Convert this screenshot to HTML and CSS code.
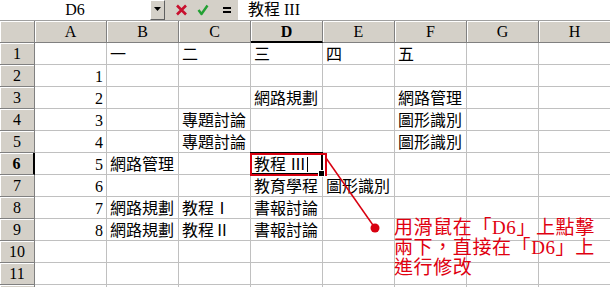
FILE: index.html
```html
<!DOCTYPE html>
<html lang="zh-Hant">
<head>
<meta charset="utf-8">
<title>Excel D6</title>
<link rel="stylesheet" href="styles.css">
</head>
<body>
<div class="app">
  <div class="fbar">
    <div class="namebox">D6</div>
    <div class="dropbtn"><svg width="7" height="4" viewBox="0 0 7 4"><path d="M0 0H7L3.5 4Z" fill="#000"/></svg></div>
    <div class="fbtns">
      <svg class="ico" width="13" height="12" viewBox="0 0 13 12"><path d="M2 1.5L11 10.5M11 1.5L2 10.5" stroke="#c8102e" stroke-width="2.6" fill="none"/></svg>
      <svg class="ico" width="12" height="12" viewBox="0 0 12 12"><path d="M1.5 6L4.5 10L10.5 1.5" stroke="#22a033" stroke-width="2.4" fill="none" stroke-linejoin="round"/></svg>
      <svg class="ico" width="8" height="6" viewBox="0 0 8 6"><path d="M0 1H8M0 5H8" stroke="#000" stroke-width="2"/></svg>
    </div>
    <div class="ftext">教程 III</div>
  </div>

  <div class="sheet">
    <div class="hd corner"></div>
    <div class="hd">A</div><div class="hd">B</div><div class="hd">C</div><div class="hd act-col">D</div><div class="hd">E</div><div class="hd">F</div><div class="hd">G</div><div class="hd">H</div>

    <div class="rh">1</div><div class="c"></div><div class="c">一</div><div class="c">二</div><div class="c">三</div><div class="c">四</div><div class="c">五</div><div class="c"></div><div class="c"></div>
    <div class="rh">2</div><div class="c num">1</div><div class="c"></div><div class="c"></div><div class="c"></div><div class="c"></div><div class="c"></div><div class="c"></div><div class="c"></div>
    <div class="rh">3</div><div class="c num">2</div><div class="c"></div><div class="c"></div><div class="c">網路規劃</div><div class="c"></div><div class="c">網路管理</div><div class="c"></div><div class="c"></div>
    <div class="rh">4</div><div class="c num">3</div><div class="c"></div><div class="c">專題討論</div><div class="c"></div><div class="c"></div><div class="c">圖形識別</div><div class="c"></div><div class="c"></div>
    <div class="rh">5</div><div class="c num">4</div><div class="c"></div><div class="c">專題討論</div><div class="c"></div><div class="c"></div><div class="c">圖形識別</div><div class="c"></div><div class="c"></div>
    <div class="rh act-row">6</div><div class="c num">5</div><div class="c">網路管理</div><div class="c"></div><div class="c active">教程 Ⅲ<span class="caret"></span></div><div class="c"></div><div class="c"></div><div class="c"></div><div class="c"></div>
    <div class="rh">7</div><div class="c num">6</div><div class="c"></div><div class="c"></div><div class="c">教育學程</div><div class="c">圖形識別</div><div class="c"></div><div class="c"></div><div class="c"></div>
    <div class="rh">8</div><div class="c num">7</div><div class="c">網路規劃</div><div class="c">教程Ⅰ</div><div class="c">書報討論</div><div class="c"></div><div class="c"></div><div class="c"></div><div class="c"></div>
    <div class="rh">9</div><div class="c num">8</div><div class="c">網路規劃</div><div class="c">教程Ⅱ</div><div class="c">書報討論</div><div class="c"></div><div class="c"></div><div class="c"></div><div class="c"></div>
    <div class="rh">10</div><div class="c"></div><div class="c"></div><div class="c"></div><div class="c"></div><div class="c"></div><div class="c"></div><div class="c"></div><div class="c"></div>
    <div class="rh">11</div><div class="c"></div><div class="c"></div><div class="c"></div><div class="c"></div><div class="c"></div><div class="c"></div><div class="c"></div><div class="c"></div>
    <div class="rh"></div><div class="c"></div><div class="c"></div><div class="c"></div><div class="c"></div><div class="c"></div><div class="c"></div><div class="c"></div><div class="c"></div>
  </div>

  <div class="redbox"></div>
  <svg class="pointer" width="610" height="287" viewBox="0 0 610 287">
    <line x1="326" y1="158" x2="375" y2="228" stroke="#d80010" stroke-width="1.5"/>
    <circle cx="375" cy="228" r="4.5" fill="#d80010"/>
  </svg>
  <div class="note">用滑鼠在「D6」上點擊<br>兩下，直接在「D6」上<br>進行修改</div>
</div>
</body>
</html>
```

FILE: styles.css
```css
html, body {
  margin: 0;
  padding: 0;
}
body {
  width: 610px;
  height: 287px;
  overflow: hidden;
  background: #fff;
  font-family: "Liberation Serif", "Noto Sans CJK TC", serif;
  color: #000;
}
.app {
  position: relative;
  width: 610px;
  height: 287px;
  overflow: hidden;
}
.fbar {
  display: flex;
  height: 20px;
  border-bottom: 1px solid #a0a0a0;
}
.namebox {
  width: 150px;
  text-align: center;
  font-size: 16px;
  line-height: 20px;
}
.dropbtn {
  width: 15px;
  box-sizing: border-box;
  background: #d4d0c8;
  border: 1px solid;
  border-color: #fff #606060 #606060 #fff;
  display: flex;
  align-items: flex-start;
  justify-content: center;
  padding-top: 6px;
}
.fbtns {
  width: 73px;
  background: #d4d0c8;
  display: flex;
  align-items: center;
  padding-left: 10px;
  box-sizing: border-box;
  gap: 9px;
}
.fbtns .ico:last-child {
  margin-left: 5px;
}
.ftext {
  flex: 1;
  padding-left: 10px;
  font-size: 16px;
  line-height: 20px;
}
.sheet {
  display: grid;
  grid-template-columns: 35px repeat(8, 72px);
  grid-auto-rows: 22px;
  width: 611px;
}
.hd, .rh {
  box-sizing: border-box;
  background: #d4d0c8;
  border-right: 1px solid #808080;
  border-bottom: 1px solid #808080;
  box-shadow: inset 1px 1px 0 #fff;
  text-align: center;
  font-size: 16px;
  line-height: 22px;
}
.act-col {
  font-weight: bold;
  border-bottom: 2px solid #000;
}
.act-row {
  font-weight: bold;
  border-right: 2px solid #000;
}
.c {
  box-sizing: border-box;
  border-right: 1px solid #c0c0c0;
  border-bottom: 1px solid #c0c0c0;
  font-size: 16px;
  line-height: 22px;
  padding: 1px 3px 0;
  white-space: nowrap;
}
.num {
  text-align: right;
}
.active {
  position: relative;
}
.active::after {
  content: "";
  position: absolute;
  left: -1px;
  top: -1px;
  right: -1px;
  bottom: -1px;
  border: 2px solid #000;
}
.active::before {
  content: "";
  position: absolute;
  right: -3px;
  bottom: -3px;
  width: 5px;
  height: 5px;
  background: #000;
  border: 1px solid #fff;
  z-index: 1;
}
.caret {
  display: inline-block;
  width: 1px;
  height: 15px;
  background: #000;
  vertical-align: -2px;
  margin-left: 1px;
}
.redbox {
  position: absolute;
  left: 250px;
  top: 153px;
  width: 77px;
  height: 23px;
  box-sizing: border-box;
  border: 2px solid #d80010;
}
.pointer {
  position: absolute;
  left: 0;
  top: 0;
}
.note {
  position: absolute;
  left: 394px;
  top: 218px;
  font-size: 19px;
  line-height: 20px;
  letter-spacing: 0.6px;
  color: #e00010;
  white-space: nowrap;
}
```
